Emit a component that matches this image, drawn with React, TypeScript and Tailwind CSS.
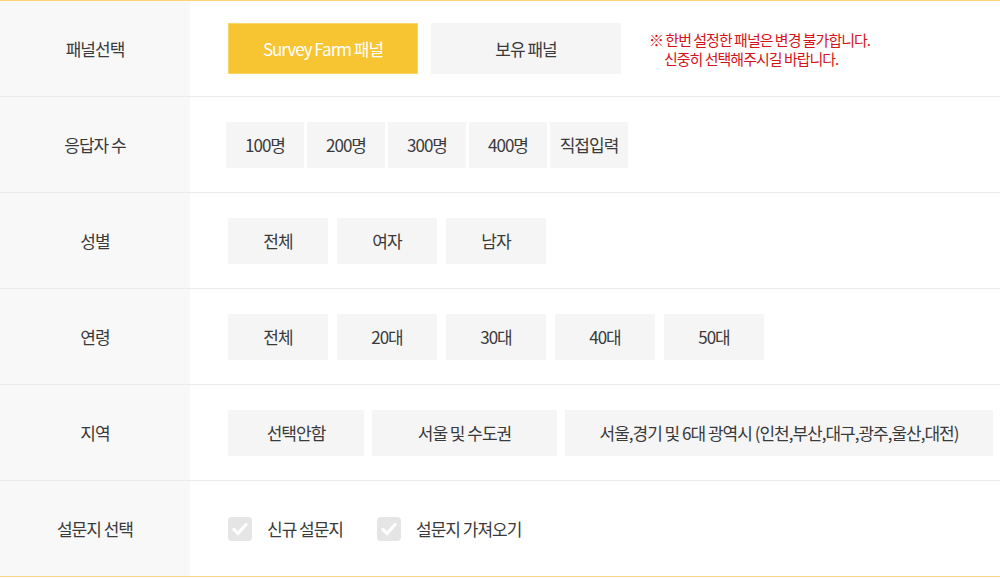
import React from 'react';

const font = { fontFamily: '"Noto Sans CJK KR", "Noto Sans", sans-serif' };

type RowProps = { label: string; last?: boolean; children: React.ReactNode };

const Row: React.FC<RowProps> = ({ label, last, children }) => (
  <div
    className={
      last
        ? 'flex h-[96px] border-b border-[#f8d68a]'
        : 'flex h-[96px] border-b border-[#ebebeb]'
    }
  >
    <div className="flex w-[190px] shrink-0 items-center justify-center bg-[#f8f8f8] text-[17px] tracking-[-1px] text-[#3a3a3a]">
      {label}
    </div>
    <div className="flex flex-1 items-center pl-[38px]">{children}</div>
  </div>
);

const Btn: React.FC<{ w: string; children: React.ReactNode }> = ({ w, children }) => (
  <button
    type="button"
    className={`flex h-[46px] ${w} items-center justify-center bg-[#f5f5f5] text-[17px] tracking-[-1px] text-[#3a3a3a]`}
  >
    {children}
  </button>
);

const Check: React.FC<{ label: string }> = ({ label }) => (
  <label className="flex items-center gap-[15px]">
    <span className="flex h-[24px] w-[24px] items-center justify-center rounded-[4px] bg-[#e5e5e5]">
      <svg width="16" height="14" viewBox="0 0 16 14">
        <path d="M2 7.5 L6 11.5 L14 2.5" fill="none" stroke="#fff" strokeWidth="3.2" strokeLinecap="round" strokeLinejoin="round" />
      </svg>
    </span>
    <span className="text-[17px] tracking-[-1px] text-[#3a3a3a]">{label}</span>
  </label>
);

export default function App() {
  return (
    <div style={font} className="w-[1000px] border-t border-[#fbd66d] bg-white">
      <Row label="패널선택">
        <div className="flex items-center gap-[13px]">
          <button
            type="button"
            className="flex h-[51px] w-[190px] items-center justify-center border border-[#fbd666] bg-[#f8c532] text-[17px] tracking-[-1px] text-white"
          >
            Survey Farm 패널
          </button>
          <button
            type="button"
            className="flex h-[51px] w-[190px] items-center justify-center bg-[#f5f5f5] text-[17px] tracking-[-1px] text-[#3a3a3a]"
          >
            보유 패널
          </button>
          <div className="ml-[15px] text-[15px] leading-[19px] tracking-[-1px] text-[#d5131b]">
            <p>※ 한번 설정한 패널은 변경 불가합니다.</p>
            <p className="pl-[15px]">신중히 선택해주시길 바랍니다.</p>
          </div>
        </div>
      </Row>
      <Row label="응답자 수">
        <div className="-ml-[2px] flex gap-[3px]">
          {['100명', '200명', '300명', '400명', '직접입력'].map((t) => (
            <Btn key={t} w="w-[78px]">
              {t}
            </Btn>
          ))}
        </div>
      </Row>
      <Row label="성별">
        <div className="flex gap-[9px]">
          {['전체', '여자', '남자'].map((t) => (
            <Btn key={t} w="w-[100px]">
              {t}
            </Btn>
          ))}
        </div>
      </Row>
      <Row label="연령">
        <div className="flex gap-[9px]">
          {['전체', '20대', '30대', '40대', '50대'].map((t) => (
            <Btn key={t} w="w-[100px]">
              {t}
            </Btn>
          ))}
        </div>
      </Row>
      <Row label="지역">
        <div className="flex gap-[8px]">
          <Btn w="w-[136px]">선택안함</Btn>
          <Btn w="w-[185px]">서울 및 수도권</Btn>
          <Btn w="w-[428px]">서울,경기 및 6대 광역시 (인천,부산,대구,광주,울산,대전)</Btn>
        </div>
      </Row>
      <Row label="설문지 선택" last>
        <div className="flex gap-[34px]">
          <Check label="신규 설문지" />
          <Check label="설문지 가져오기" />
        </div>
      </Row>
    </div>
  );
}
